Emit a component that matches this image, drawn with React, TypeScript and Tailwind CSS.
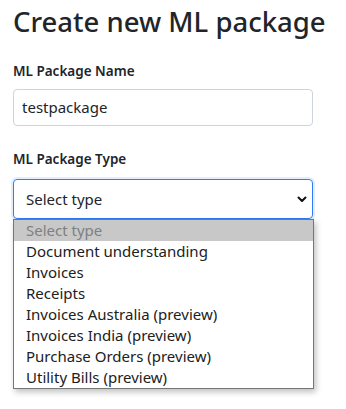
const types = [
  "Select type",
  "Document understanding",
  "Invoices",
  "Receipts",
  "Invoices Australia (preview)",
  "Invoices India (preview)",
  "Purchase Orders (preview)",
  "Utility Bills (preview)",
];

export default function App() {
  return (
    <div
      className="min-h-[409px] bg-white px-[13px] pt-[5px] text-[#212529]"
      style={{ fontFamily: '"Noto Sans", "Open Sans", sans-serif' }}
    >
      <h1 className="text-[27.5px] leading-[1.2] font-medium">Create new ML package</h1>

      <div className="mt-[23px]">
        <label className="block text-[13.5px] leading-[20px] font-semibold">ML Package Name</label>
        <div className="mt-[8px] w-[300px] h-[37px] rounded-[4px] border border-[#ced4da] px-[8px] flex items-center text-[15px]">
          testpackage
        </div>
      </div>

      <div className="mt-[23px]">
        <label className="block text-[13.5px] leading-[20px] font-semibold">ML Package Type</label>
        <div className="relative mt-[10px] w-[300px]">
          <div className="h-[40px] rounded-[4px] border border-[#2f7cf6] shadow-[0_0_0_2px_rgba(13,110,253,0.12)] pl-[12px] pr-[5px] flex items-center justify-between text-[15px]">
            <span>Select type</span>
            <svg width="10" height="7" viewBox="0 0 10 7">
              <path d="M1.5 1.5 L5 5 L8.5 1.5" fill="none" stroke="#111" strokeWidth="2" strokeLinecap="round" strokeLinejoin="round" />
            </svg>
          </div>
          <ul className="absolute left-0 top-[40px] w-[301px] border border-[#767676] bg-white shadow-[2px_3px_6px_rgba(0,0,0,0.25)] text-[15px] leading-[21px]">
            {types.map((t, i) => (
              <li
                key={t}
                className={i === 0 ? "bg-[#c8c8c8] text-[#808080] pl-[12px] h-[21px]" : "text-[#212121] pl-[12px] h-[21px]"}
              >
                {t}
              </li>
            ))}
          </ul>
        </div>
      </div>
    </div>
  );
}
